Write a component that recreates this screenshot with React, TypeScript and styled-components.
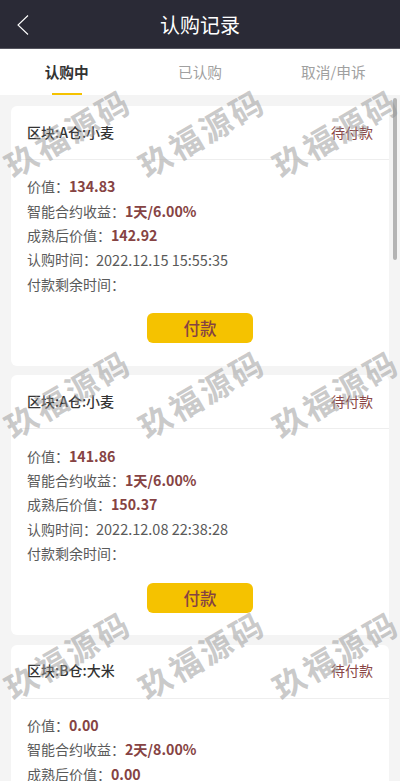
import React from 'react'
import styled, { createGlobalStyle } from 'styled-components'

const GlobalStyle = createGlobalStyle`
  html, body {
    margin: 0;
    padding: 0;
    height: 100%;
    overflow: hidden;
    background: #f4f4f4;
    font-family: "Noto Sans CJK SC", "Open Sans", sans-serif;
  }
  * { box-sizing: border-box; }
`

const Page = styled.div`
  position: relative;
  width: 400px;
  height: 781px;
  overflow: hidden;
  display: flex;
  flex-direction: column;
`

const Header = styled.header`
  height: 49px;
  flex: none;
  background: #2a2a36;
  border-bottom: 1px solid #55555f;
  color: #fff;
  display: flex;
  align-items: center;
  justify-content: center;
  position: relative;
  font-size: 20px;
`

const BackIcon = styled.svg`
  position: absolute;
  left: 16px;
  top: 14px;
  width: 14px;
  height: 22px;
`

const Tabs = styled.nav`
  height: 46px;
  flex: none;
  background: #fff;
  display: grid;
  grid-template-columns: repeat(3, 1fr);
`

const Tab = styled.div<{ $active?: boolean }>`
  position: relative;
  display: flex;
  align-items: center;
  justify-content: center;
  padding-bottom: 2px;
  font-size: 14.7px;
  font-weight: ${({ $active }) => ($active ? 700 : 400)};
  color: ${({ $active }) => ($active ? '#333' : '#a0a0a0')};

  ${({ $active }) => $active && `
    &::after {
      content: '';
      position: absolute;
      left: 52px;
      bottom: 0;
      width: 30px;
      height: 2px;
      background: #f5c200;
    }
  `}
`

const List = styled.main`
  flex: 1;
  min-height: 0;
  overflow: hidden;
  padding: 11px 11px 0;
  display: flex;
  flex-direction: column;
  gap: 9.9px;
`

const Card = styled.section`
  flex: none;
  height: 259.5px;
  background: #fff;
  border-radius: 6px;
  padding-left: 10px;
`

const CardHead = styled.div`
  height: 54px;
  border-bottom: 1px solid #eeeeee;
  padding: 0 16px 2px 6px;
  display: flex;
  align-items: center;
  justify-content: space-between;
`

const Title = styled.span`
  font-size: 14px;
  font-weight: 500;
  color: #333;
`

const Status = styled.span`
  font-size: 14px;
  color: #8a4646;
`

const Rows = styled.div`
  padding: 14px 0 0 6px;
`

const Row = styled.div`
  height: 24.4px;
  display: flex;
  align-items: center;
  font-size: 14px;
  color: #5a5a5a;
`

const Value = styled.span`
  font-size: 14.2px;
  font-weight: 700;
  color: #864343;
`

const Time = styled.span`
  color: #5a5a5a;
  font-size: 14.5px;
  margin-left: -1px;
`

const PayWrap = styled.div`
  display: flex;
  justify-content: center;
  padding: 17.3px 10px 0 0;
`

const PayButton = styled.button`
  width: 106px;
  height: 30px;
  border: 0;
  border-radius: 6px;
  background: #f5c200;
  color: #864343;
  font: 500 16.5px "Noto Sans CJK SC", sans-serif;
  padding: 0;
`

const Scrollbar = styled.div`
  position: absolute;
  left: 393px;
  top: 98px;
  width: 4px;
  height: 162px;
  border-radius: 2px;
  background: #b4b4b4;
`

const Watermarks = styled.div`
  position: absolute;
  left: 0;
  top: 86px;
  width: 400px;
  display: grid;
  grid-template-columns: repeat(3, 134px);
  grid-auto-rows: 261px;
  pointer-events: none;
`

const Mark = styled.span`
  width: 134px;
  height: 92px;
  display: flex;
  align-items: center;
  justify-content: center;
  white-space: nowrap;
  transform: rotate(-30deg);
  font-size: 32px;
  font-weight: 700;
  letter-spacing: 3px;
  color: rgba(150, 150, 150, 0.5);
`

interface Order {
  title: string
  value: string
  income: string
  matured: string
  time?: string
}

const orders: Order[] = [
  { title: '区块:A仓:小麦', value: '134.83', income: '1天/6.00%', matured: '142.92', time: '2022.12.15 15:55:35' },
  { title: '区块:A仓:小麦', value: '141.86', income: '1天/6.00%', matured: '150.37', time: '2022.12.08 22:38:28' },
  { title: '区块:B仓:大米', value: '0.00', income: '2天/8.00%', matured: '0.00' },
]

export default function App() {
  return (
    <Page>
      <GlobalStyle />
      <Header>
        <BackIcon viewBox="0 0 14 22" fill="none" stroke="#fff" strokeWidth="1.1">
          <path d="M12 1.5 2 11l10 9.5" />
        </BackIcon>
        认购记录
      </Header>
      <Tabs>
        <Tab $active>认购中</Tab>
        <Tab>已认购</Tab>
        <Tab>取消/申诉</Tab>
      </Tabs>
      <List>
        {orders.map((order, i) => (
          <Card key={i}>
            <CardHead>
              <Title>{order.title}</Title>
              <Status>待付款</Status>
            </CardHead>
            <Rows>
              <Row>价值：<Value>{order.value}</Value></Row>
              <Row>智能合约收益：<Value>{order.income}</Value></Row>
              <Row>成熟后价值：<Value>{order.matured}</Value></Row>
              <Row>认购时间：<Time>{order.time}</Time></Row>
              <Row>付款剩余时间：</Row>
            </Rows>
            <PayWrap>
              <PayButton>付款</PayButton>
            </PayWrap>
          </Card>
        ))}
      </List>
      <Scrollbar />
      <Watermarks>
        {Array.from({ length: 9 }).map((_, i) => (
          <Mark key={i}>玖福源码</Mark>
        ))}
      </Watermarks>
    </Page>
  )
}
